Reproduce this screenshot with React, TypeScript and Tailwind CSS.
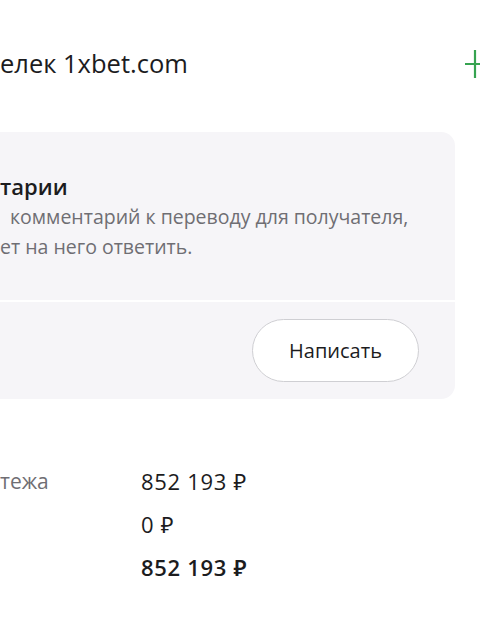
import { useState } from "react";

const rows = [
	{ label: "тежа", value: "852 193 ₽", strong: false },
	{ label: "", value: "0 ₽", strong: false },
	{ label: "", value: "852 193 ₽", strong: true },
];

const App = () => {
	const [comment, setComment] = useState<string>("");

	return (
		<div
			className="w-[480px] h-[640px] overflow-hidden bg-white text-[#1c1c1e]"
			style={{ fontFamily: '"Open Sans", "Noto Sans", sans-serif' }}
		>
			{/* header */}
			<div className="flex items-center justify-between h-[130px] pb-[4px]">
				<h1 className="text-[25.5px] leading-[36px] font-normal">елек 1xbet.com</h1>
				<button className="mr-[-11px] mt-[2px] text-[#36a350]" aria-label="add">
					<svg width="26" height="30" viewBox="0 0 26 30" fill="none">
						<path d="M10 1v28M-2 15h26" stroke="currentColor" strokeWidth="2.2" />
					</svg>
				</button>
			</div>

			{/* comments card */}
			<div className="w-[455px] mt-[2px] bg-[#f6f5f8] rounded-r-[14px]">
				<div className="pt-[39px] pb-[38px]">
					<h2 className="text-[22px] leading-[30px] font-semibold">тарии</h2>
					<p className="mt-[1px] text-[19.5px] leading-[30px] text-[#6f6e73]">
						<span className="block pl-[10px]">комментарий к переводу для получателя,</span>
						<span className="block">ет на него ответить.</span>
					</p>
				</div>
				<div className="h-[2px] bg-white" />
				<div className="flex justify-end pt-[17px] pb-[17px] pr-[36px]">
					<button
						onClick={() => setComment(comment + " ")}
						className="w-[167px] h-[63px] rounded-full bg-white border border-[#cfcfd3] text-[20px] font-medium"
					>
						Написать
					</button>
				</div>
			</div>

			{/* totals */}
			<div className="mt-[67px] flex flex-col gap-[12px]">
				{rows.map((r, i) => (
					<div key={i} className="flex items-center h-[31px] text-[22px] tracking-[0.7px]">
						<span className="w-[141px] text-[21px] tracking-normal text-[#6f6e73]">{r.label}</span>
						<span className={r.strong ? "font-semibold" : ""}>{r.value}</span>
					</div>
				))}
			</div>
		</div>
	);
};

export default App;
